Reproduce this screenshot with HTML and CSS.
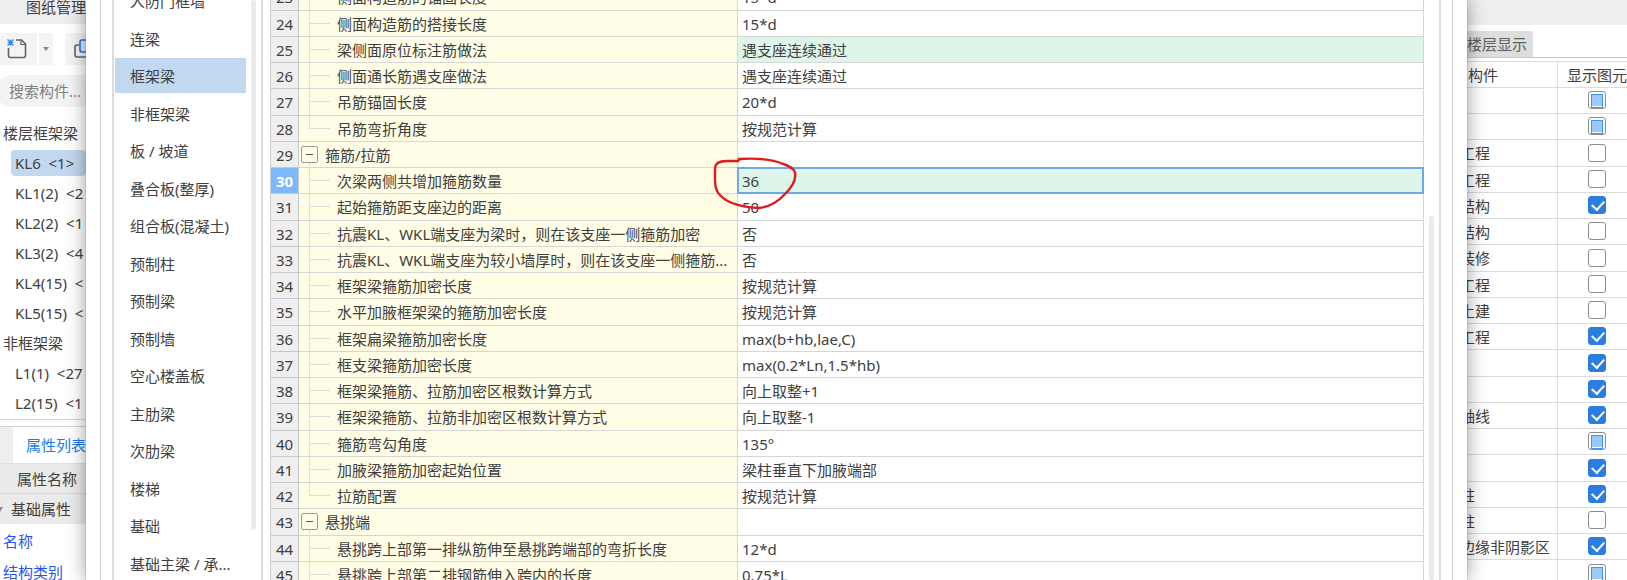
FILE: index.html
```
<!DOCTYPE html>
<html lang="zh-CN">
<head>
<meta charset="utf-8">
<title>计算设置</title>
<link rel="stylesheet" href="styles.css">
</head>
<body>
<div class="app">
  <aside class="left">
    <div class="left-tab">图纸管理</div>
    <div class="toolbar">
      <button class="tool tool-new" aria-label="新建">
        <svg width="20" height="20" viewBox="0 0 20 20" fill="none">
          <path d="M9 1h5.500l4 4v11.500a2 2 0 0 1-2 2H3.500a2 2 0 0 1-2-2V9" stroke="#5b6370" stroke-width="1.600"/>
          <path d="M14 1.500V5.500h4.500" stroke="#5b6370" stroke-width="1.200"/>
          <path d="M.5 .5l6 6M6.500 .5l-6 6M3.500 .5v6M.5 3.500h6" stroke="#2f86ee" stroke-width="1.200"/>
        </svg>
      </button>
      <button class="tool tool-drop" aria-label="更多">
        <svg width="6" height="4" viewBox="0 0 6 4"><path d="M0 0h6L3 4z" fill="#8a8a8a"/></svg>
      </button>
      <button class="tool tool-copy" aria-label="复制">
        <svg width="22" height="20" viewBox="0 0 22 20" fill="none">
          <path d="M5 6H3a2 2 0 0 0-2 2v8a2 2 0 0 0 2 2h11" stroke="#5b6370" stroke-width="1.600"/>
          <rect x="6" y="1" width="14" height="12" rx="2" stroke="#1f7be6" stroke-width="1.600" fill="#dcebfd"/>
        </svg>
      </button>
    </div>
    <input class="search" type="text" placeholder="搜索构件..." aria-label="搜索构件">
    <ul class="tree">
      <li class="group">楼层框架梁</li>
      <li><span class="node on">KL6 &nbsp;&lt;1&gt;</span></li>
      <li><span class="node">KL1(2) &nbsp;&lt;2</span></li>
      <li><span class="node">KL2(2) &nbsp;&lt;1</span></li>
      <li><span class="node">KL3(2) &nbsp;&lt;4</span></li>
      <li><span class="node">KL4(15) &nbsp;&lt;</span></li>
      <li><span class="node">KL5(15) &nbsp;&lt;</span></li>
      <li class="group">非框架梁</li>
      <li><span class="node">L1(1) &nbsp;&lt;27</span></li>
      <li><span class="node">L2(15) &nbsp;&lt;1</span></li>
    </ul>
    <div class="prop-tabs"><span class="prop-tab">属性列表</span></div>
    <div class="prop-head">属性名称</div>
    <div class="prop-group"><svg width="3" height="5" viewBox="0 0 3 5"><path d="M0 0h3L0 5z" fill="#888"/></svg>基础属性</div>
    <a class="prop" href="#">名称</a>
    <a class="prop" href="#">结构类别</a>
  </aside>

  <main class="dialog">
    <div class="inner">
      <div class="frame">
        <nav class="cats">
          <button class="cat">人防门框墙</button>
          <button class="cat">连梁</button>
          <button class="cat on">框架梁</button>
          <button class="cat">非框架梁</button>
          <button class="cat">板 / 坡道</button>
          <button class="cat">叠合板(整厚)</button>
          <button class="cat">组合板(混凝土)</button>
          <button class="cat">预制柱</button>
          <button class="cat">预制梁</button>
          <button class="cat">预制墙</button>
          <button class="cat">空心楼盖板</button>
          <button class="cat">主肋梁</button>
          <button class="cat">次肋梁</button>
          <button class="cat">楼梯</button>
          <button class="cat">基础</button>
          <button class="cat">基础主梁 / 承...</button>
        </nav>
        <div class="rail rail-cats"><i class="thumb thumb-cats"></i></div>
        <section class="sheet">
          <table class="grid">
            <colgroup><col class="c-num"><col class="c-name"><col></colgroup>
            <tbody>
              <tr><th>23</th><td class="name leaf">侧面构造筋的锚固长度</td><td>15*d</td></tr>
              <tr><th>24</th><td class="name leaf">侧面构造筋的搭接长度</td><td>15*d</td></tr>
              <tr><th>25</th><td class="name leaf">梁侧面原位标注筋做法</td><td class="changed">遇支座连续通过</td></tr>
              <tr><th>26</th><td class="name leaf">侧面通长筋遇支座做法</td><td>遇支座连续通过</td></tr>
              <tr><th>27</th><td class="name leaf">吊筋锚固长度</td><td>20*d</td></tr>
              <tr><th>28</th><td class="name leaf last">吊筋弯折角度</td><td>按规范计算</td></tr>
              <tr><th>29</th><td class="name parent"><button class="fold" aria-label="折叠"></button>箍筋/拉筋</td><td></td></tr>
              <tr class="current"><th>30</th><td class="name leaf">次梁两侧共增加箍筋数量</td><td class="changed">36
                <svg class="mark" width="90" height="58" viewBox="0 0 90 58" fill="none"><path d="M27 7V5C43 4 60 5 71 10C83 14 84 18 83 23C83 29 79 34 73 40C65 49 56 53 47 54C37 54 22 51 14 46C5 40 3 35 3 27V15C3 9 8 7 15 7H27" stroke="#e3191b" stroke-width="2.400"/></svg></td></tr>
              <tr><th>31</th><td class="name leaf">起始箍筋距支座边的距离</td><td>50</td></tr>
              <tr><th>32</th><td class="name leaf">抗震KL、WKL端支座为梁时，则在该支座一侧箍筋加密</td><td>否</td></tr>
              <tr><th>33</th><td class="name leaf">抗震KL、WKL端支座为较小墙厚时，则在该支座一侧箍筋...</td><td>否</td></tr>
              <tr><th>34</th><td class="name leaf">框架梁箍筋加密长度</td><td>按规范计算</td></tr>
              <tr><th>35</th><td class="name leaf">水平加腋框架梁的箍筋加密长度</td><td>按规范计算</td></tr>
              <tr><th>36</th><td class="name leaf">框架扁梁箍筋加密长度</td><td>max(b+hb,lae,C)</td></tr>
              <tr><th>37</th><td class="name leaf">框支梁箍筋加密长度</td><td>max(0.2*Ln,1.5*hb)</td></tr>
              <tr><th>38</th><td class="name leaf">框架梁箍筋、拉筋加密区根数计算方式</td><td>向上取整+1</td></tr>
              <tr><th>39</th><td class="name leaf">框架梁箍筋、拉筋非加密区根数计算方式</td><td>向上取整-1</td></tr>
              <tr><th>40</th><td class="name leaf">箍筋弯勾角度</td><td>135°</td></tr>
              <tr><th>41</th><td class="name leaf">加腋梁箍筋加密起始位置</td><td>梁柱垂直下加腋端部</td></tr>
              <tr><th>42</th><td class="name leaf last">拉筋配置</td><td>按规范计算</td></tr>
              <tr><th>43</th><td class="name parent"><button class="fold" aria-label="折叠"></button>悬挑端</td><td></td></tr>
              <tr><th>44</th><td class="name leaf">悬挑跨上部第一排纵筋伸至悬挑跨端部的弯折长度</td><td>12*d</td></tr>
              <tr><th>45</th><td class="name leaf">悬挑跨上部第二排钢筋伸入跨内的长度</td><td>0.75*L</td></tr>
            </tbody>
          </table>
        </section>
        <div class="rail rail-sheet"><i class="thumb thumb-sheet"></i></div>
      </div>
    </div>
  </main>

  <aside class="right">
    <div class="right-top"></div>
    <div class="right-tabs"><span class="right-tab">楼层显示</span></div>
    <table class="vis">
      <colgroup><col class="v-name"><col></colgroup>
      <thead><tr><th class="v-part">构件</th><th>显示图元</th></tr></thead>
      <tbody>
        <tr><td></td><td><input type="checkbox" class="partial" aria-label="显示"></td></tr>
        <tr><td></td><td><input type="checkbox" class="partial" aria-label="显示"></td></tr>
        <tr><td>工程</td><td><input type="checkbox" aria-label="显示工程"></td></tr>
        <tr><td>工程</td><td><input type="checkbox" aria-label="显示工程"></td></tr>
        <tr><td>结构</td><td><input type="checkbox" checked aria-label="显示结构"></td></tr>
        <tr><td>结构</td><td><input type="checkbox" aria-label="显示结构"></td></tr>
        <tr><td>装修</td><td><input type="checkbox" aria-label="显示装修"></td></tr>
        <tr><td>工程</td><td><input type="checkbox" aria-label="显示工程"></td></tr>
        <tr><td>土建</td><td><input type="checkbox" aria-label="显示土建"></td></tr>
        <tr><td>工程</td><td><input type="checkbox" checked aria-label="显示工程"></td></tr>
        <tr><td></td><td><input type="checkbox" checked aria-label="显示"></td></tr>
        <tr><td></td><td><input type="checkbox" checked aria-label="显示"></td></tr>
        <tr><td>轴线</td><td><input type="checkbox" checked aria-label="显示轴线"></td></tr>
        <tr><td></td><td><input type="checkbox" class="partial" aria-label="显示"></td></tr>
        <tr><td></td><td><input type="checkbox" checked aria-label="显示"></td></tr>
        <tr><td>柱</td><td><input type="checkbox" checked aria-label="显示柱"></td></tr>
        <tr><td>柱</td><td><input type="checkbox" aria-label="显示柱"></td></tr>
        <tr><td>边缘非阴影区</td><td><input type="checkbox" checked aria-label="显示边缘非阴影区"></td></tr>
        <tr><td></td><td><input type="checkbox" class="partial" aria-label="显示"></td></tr>
      </tbody>
    </table>
  </aside>
</div>
</body>
</html>
```

FILE: styles.css
```
* { box-sizing: border-box; }
body {
  margin: 0;
  height: 100vh;
  overflow: hidden;
  font: 15px/20px "Noto Sans", "Noto Sans CJK SC", sans-serif;
  color: #404040;
  background: #fff;
}
button, input { font: inherit; color: inherit; margin: 0; }
button { border: 0; padding: 0; background: none; text-align: left; }
ul { list-style: none; margin: 0; padding: 0; }
svg { display: block; }

.app { display: flex; height: 100%; overflow: hidden; }

/* component panel */
.left {
  flex: 0 0 86px;
  overflow: hidden;
  white-space: nowrap;
  display: flex;
  flex-direction: column;
}
.left > * { flex-shrink: 0; }
.left-tab { height: 24px; line-height: 14px; padding-left: 26px; background: #eeeef0; }
.toolbar { display: flex; height: 32px; margin-top: 9px; }
.tool { display: flex; align-items: center; justify-content: center; background: #f4f4f4; flex-shrink: 0; }
.tool-new { width: 37px; justify-content: flex-start; padding-left: 7px; }
.tool-drop { width: 14px; margin-left: 2px; }
.tool-copy { width: 40px; margin-left: 12px; border-radius: 4px 0 0 4px; }
.search {
  width: 110px;
  height: 32px;
  margin: 10px 0 0 -4px;
  padding: 0 0 0 13px;
  border: 0;
  border-radius: 16px;
  background: #f3f3f3;
}
.search::placeholder { color: #808080; opacity: 1; }
.tree { margin-top: 11px; height: 302px; border-bottom: 1px solid #d4d4d4; }
.tree li { display: flex; align-items: center; height: 30px; padding-left: 11px; }
.tree .group { padding-left: 3px; }
.node { flex: 1 0 auto; height: 26px; line-height: 26px; padding-left: 4px; border-radius: 4px; }
.node.on { background: #c2d8f0; }
.prop-tabs { height: 38px; margin-top: 6px; padding-left: 13px; background: #eeeef0; border-top: 1px solid #d4d4d4; border-bottom: 1px solid #e0e0e0; }
.prop-tab { display: block; height: 36px; line-height: 36px; padding-left: 13px; background: #fff; color: #1a7be8; }
.prop-head { height: 30px; line-height: 30px; padding-left: 17px; background: #ebebeb; border-bottom: 1px solid #d8d8d8; }
.prop-group { display: flex; align-items: center; gap: 8px; height: 30px; background: #ebebeb; }
.prop { height: 31px; line-height: 34px; padding-left: 3px; color: #1f55f5; text-decoration: none; }

/* settings dialog */
.dialog {
  flex: 1;
  min-width: 0;
  position: relative;
  z-index: 1;
  display: flex;
  padding: 0 14px;
  background: #fff;
  box-shadow: 0 0 18px rgba(0, 0, 0, .4), 0 0 1px #888;
}
.inner { flex: 1; min-width: 0; display: flex; padding: 0 11px; border: solid #c8ced4; border-width: 0 1px; }
.frame { flex: 1; min-width: 0; display: flex; border: solid #dcdcdc; border-width: 0 2px; }
.cats { flex: 0 0 132px; display: flex; flex-direction: column; margin-top: -17px; padding-left: 1px; overflow: hidden; }
.cat { flex: 0 0 35px; margin-bottom: 3px; padding-left: 15px; white-space: nowrap; }
.cat:nth-child(even) { margin-bottom: 2px; }
.cat.on { background: #c2d8f0; }
.rail { display: flex; justify-content: center; flex: 0 0 14px; }
.rail-cats { border-right: 2px solid #dcdcdc; flex-basis: 17px; }
.rail-sheet { flex-basis: 15px; }
.thumb { width: 5px; border-radius: 3px; background: #ebebeb; }
.thumb-cats { margin-bottom: 50px; }
.thumb-sheet { margin-top: 216px; }
.sheet { flex: 1; min-width: 0; margin-top: -16px; padding-left: 7px; overflow: hidden; }
.grid { width: 100%; table-layout: fixed; border-spacing: 0; border-left: 1px solid #ccc; }
.c-num { width: 28px; }
.c-name { width: 439px; }
.grid th, .grid td { height: 26px; padding: 0; border: solid #d6d6d6; border-width: 0 1px 1px 0; white-space: nowrap; }
.grid tr:nth-child(4n+1) > * { height: 27px; }
.grid th { background: #efefef; font-weight: 400; border-color: #c8c8c8; }
.grid td { padding-left: 4px; position: relative; }
.grid .name { background: #fffde6; }
.grid .leaf { padding-left: 38px; }
.leaf::before { content: ""; position: absolute; left: 10px; top: 0; bottom: -1px; border-left: 1px solid #dedede; }
.leaf::after { content: ""; position: absolute; left: 10px; top: 12px; width: 21px; border-top: 1px solid #dedede; }
.leaf.last::before { bottom: 13px; }
.grid .parent { padding-left: 26px; }
.parent::before { content: ""; position: absolute; left: 10px; top: 20px; bottom: -1px; border-left: 1px solid #dedede; }
.fold { position: absolute; left: 2px; top: 4px; width: 17px; height: 17px; border: 1px solid #999; border-radius: 2px; background: #fffde6; }
.fold::before { content: ""; display: block; width: 7px; margin: 0 auto; border-top: 1px solid #555; }
.grid .changed { background: #def5ea; }
.grid .current th { background: #7db8fb; color: #fff; font-weight: 700; }
.current .changed::before { content: ""; position: absolute; inset: -1px; border: 2px solid #6fa8e8; }
.mark { position: absolute; left: -26px; top: -14px; z-index: 2; }

/* floor visibility panel */
.right { flex: 0 0 160px; overflow: hidden; white-space: nowrap; }
.right-top { height: 25px; background: #eeeef0; }
.right-tabs { height: 33px; padding-top: 6px; border-bottom: 1px solid #c8c8c8; display: flex; }
.right-tab { width: 66px; height: 26px; line-height: 26px; background: #dedede; color: #606060; border-radius: 0 4px 0 0; }
.vis { width: 170px; margin: 3px 0 0 -8px; table-layout: fixed; border-spacing: 0; border-top: 1px solid #dcdcdc; }
.v-name { width: 99px; }
.vis th, .vis td { height: 26px; padding: 0 0 0 1px; border: solid #dcdcdc; border-width: 0 1px 1px 0; font-weight: 400; text-align: left; }
.vis tbody tr:nth-child(4n+3) > * { height: 27px; }
.vis th { padding-left: 9px; }
.vis td + td { padding: 0 0 1px 30px; }
.vis input {
  appearance: none;
  display: block;
  width: 18px;
  height: 18px;
  border: 1px solid #8c8c8c;
  border-radius: 3px;
  background: #fff;
}
.vis input.partial { padding: 2px; background: #9cc9fb content-box; }
.vis input.partial::before { content: ""; display: block; height: 12px; border: 1px solid #3d94f6; }
.vis input:checked { border-color: #2a7de1; background: #2a7de1; }
.vis input:checked::before {
  content: "";
  display: block;
  width: 6px;
  height: 10px;
  margin: 1px 0 0 5px;
  border: solid #fff;
  border-width: 0 2px 2px 0;
  transform: rotate(42deg);
}
```
